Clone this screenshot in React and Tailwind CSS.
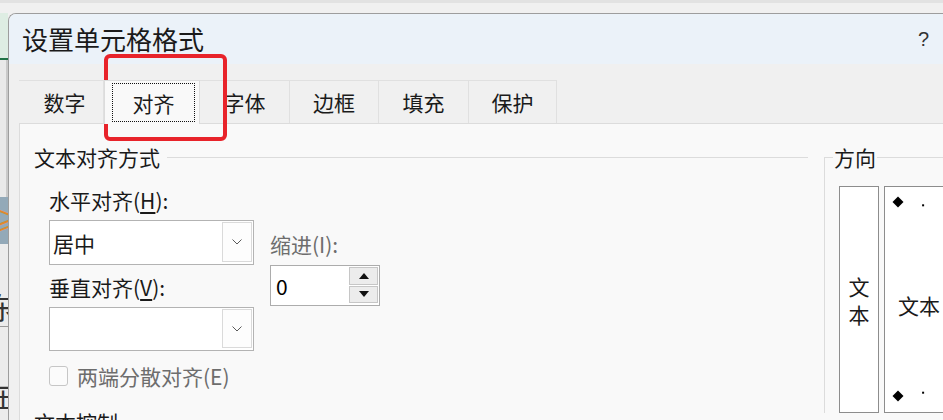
import React from "react";

function Chevron() {
  return (
    <svg width="10" height="6" viewBox="0 0 10 6">
      <polyline points="0.5,0.5 5,5 9.5,0.5" fill="none" stroke="#5a5a5a" strokeWidth="1" />
    </svg>
  );
}

function Select({ value, h }) {
  return (
    <div className={`flex items-stretch border border-[#b3b3b3] bg-white ${h}`}>
      <div className="flex-1 flex items-center pl-[3px] text-[21px] leading-[24px]">{value}</div>
      <div className="w-[30px] mt-px mr-px mb-[2px] border border-[#dadada] bg-[#fdfdfd] flex items-center justify-center">
        <Chevron />
      </div>
    </div>
  );
}

function Tri({ down }) {
  return (
    <svg width="10" height="6" viewBox="0 0 10 6">
      {down ? <polygon points="0,0 10,0 5,6" fill="#111" /> : <polygon points="0,6 10,6 5,0" fill="#111" />}
    </svg>
  );
}

function Dial() {
  const cx = 13, cy = 112, r = 97;
  const items = [];
  for (let a = 90; a >= -90; a -= 15) {
    const rad = (a * Math.PI) / 180;
    const x = cx + r * Math.cos(rad);
    const y = cy - r * Math.sin(rad);
    if (a % 45 === 0) {
      items.push(<polygon key={a} points={`${x},${y - 5.5} ${x + 5.5},${y} ${x},${y + 5.5} ${x - 5.5},${y}`} fill="#000" />);
    } else {
      items.push(<rect key={a} x={x - 1} y={y - 1} width="2" height="2" fill="#000" />);
    }
  }
  return (
    <svg className="absolute left-0 top-0" width="140" height="225" viewBox="0 0 140 225">
      {items}
    </svg>
  );
}

export default function App() {
  const tabs = [
    { t: "数字", w: "w-[85px]", extra: "pl-[7px]" },
    { t: "对齐", w: "w-[96px]", sel: true },
    { t: "字体", w: "w-[90px]" },
    { t: "边框", w: "w-[89px]" },
    { t: "填充", w: "w-[90px]" },
    { t: "保护", w: "w-[88px]" },
  ];
  return (
    <div className="relative w-[943px] h-[420px] overflow-hidden bg-[#f0f0f0] font-['Noto_Sans_CJK_SC','Microsoft_YaHei',sans-serif] text-[#1a1a1a]">
      <div className="h-[13px] bg-[#f0f0f0] border-t-[3px] border-[#e2e2e2]" />
      <div className="flex h-[407px]">
        {/* sheet behind dialog */}
        <div className="w-[8px] shrink-0 flex flex-col overflow-hidden">
          <div className="h-[45px] bg-[#deede3]" />
          <div className="h-[2px] bg-[#217346]" />
          <div className="h-[137px] bg-[#e9e9e9] border-r-2 border-[#c9c9c9]" />
          <div className="h-[47px] bg-[#93a9b8] overflow-hidden whitespace-nowrap text-[#e08a2c] text-[28px] leading-[47px] -indent-[6px]">≥</div>
          <div className="flex-1 bg-[#ececec] overflow-hidden whitespace-nowrap text-[#333] text-[30px] leading-[34px]">
            <div className="h-[45px]" />
            <div className="-ml-[14px]">东</div>
            <div className="h-px bg-[#9a9a9a] mt-[3px]" />
            <div className="h-[50px]" />
            <div className="-ml-[16px]">在</div>
          </div>
        </div>

        {/* dialog */}
        <div className="flex-1 min-w-0 flex flex-col bg-[#f0f0f0] border-l border-t border-[#9d9d9d] rounded-tl-[8px] overflow-hidden">
          <div className="h-[50px] shrink-0 bg-[#ebf2f9] flex items-center justify-between pl-[13px] pr-[14px]">
            <span className="text-[26px] leading-[30px] text-[#1a1a1a]">设置单元格格式</span>
            <span className="text-[20px] leading-[24px] text-[#333] font-['Liberation_Sans',sans-serif]">?</span>
          </div>
          <div className="flex-1 flex flex-col pl-[10px]">
            <div className="h-[59px] shrink-0 flex items-end">
              {tabs.map((tab) =>
                tab.sel ? (
                  <div key={tab.t} className={`${tab.w} h-[44px] -mb-px relative z-10 bg-[#f9f9f9] border-t border-x border-[#dcdcdc] flex`}>
                    <div className="flex-1 ml-[7px] mr-[4px] mt-[2px] mb-[2px] border border-dotted border-[#111] flex items-center justify-center text-[21px] leading-[24px]">
                      {tab.t}
                    </div>
                  </div>
                ) : (
                  <div key={tab.t} className={`${tab.w} ${tab.extra || ""} h-[43px] bg-[#f0f0f0] border-t border-r border-[#e0e0e0] flex items-center justify-center text-[21px] leading-[24px]`}>
                    {tab.t}
                  </div>
                )
              )}
            </div>
            <div className="flex-1 bg-[#f9f9f9] border-t border-l border-[#dcdcdc] flex items-start pt-[21px] pl-[14px] overflow-hidden">
              {/* left column */}
              <div className="w-[774px] shrink-0 flex flex-col">
                <div className="flex items-center h-[24px]">
                  <span className="text-[21px] leading-[24px]">文本对齐方式</span>
                  <div className="flex-1 h-px bg-[#dcdcdc] ml-[7px]" />
                </div>
                <div className="flex mt-[19px] pl-[15px]">
                  <div className="w-[205px] flex flex-col">
                    <div className="h-[24px] text-[21px] leading-[24px]">
                      水平对齐(<span className="underline underline-offset-[3px]">H</span>):
                    </div>
                    <div className="mt-[8px]">
                      <Select value="居中" h="h-[45px]" />
                    </div>
                    <div className="mt-[10px] h-[24px] text-[21px] leading-[24px]">
                      垂直对齐(<span className="underline underline-offset-[3px]">V</span>):
                    </div>
                    <div className="mt-[8px]">
                      <Select value="" h="h-[44px]" />
                    </div>
                    <div className="mt-[15px] h-[20px] flex items-center">
                      <div className="w-[19px] h-[20px] shrink-0 border border-[#c6c6c6] rounded-[3px] bg-[#fbfbfb]" />
                      <span className="ml-[9px] whitespace-nowrap text-[21px] leading-[24px] text-[#6d6d6d]">两端分散对齐(E)</span>
                    </div>
                  </div>
                  <div className="ml-[16px] pt-[44px] flex flex-col">
                    <div className="h-[24px] text-[21px] leading-[24px] text-[#6d6d6d]">缩进(I):</div>
                    <div className="mt-[9px] w-[110px] h-[41px] flex border border-[#acacac] bg-white">
                      <div className="flex-1 flex items-center pl-[5px] text-[21px] leading-[24px] text-black">0</div>
                      <div className="w-[29px] mt-px mr-px mb-[2px] flex flex-col gap-px">
                        <div className="flex-1 border border-[#c6c6c6] bg-[#ececec] flex items-center justify-center">
                          <Tri />
                        </div>
                        <div className="flex-1 border border-[#c6c6c6] bg-[#ececec] flex items-center justify-center">
                          <Tri down />
                        </div>
                      </div>
                    </div>
                  </div>
                </div>
                <div className="mt-[24px] h-[24px] text-[21px] leading-[24px]">文本控制</div>
              </div>

              {/* orientation group */}
              <fieldset className="ml-[16px] w-[300px] shrink-0 border-l border-t border-[#dcdcdc] border-r-0 border-b-0">
                <legend className="ml-[8px] px-px text-[21px] leading-[24px]">方向</legend>
                <div className="flex mt-[17px] ml-[14px]">
                  <div className="w-[40px] h-[227px] border border-[#8d8d8d] bg-white flex flex-col items-center justify-center text-[21px] leading-[28px]">
                    <span>文</span>
                    <span>本</span>
                  </div>
                  <div className="relative ml-[5px] w-[140px] h-[227px] border border-[#8d8d8d] bg-white flex items-center pl-[13px] pt-[11px] text-[21px] leading-[24px]">
                    <Dial />
                    <span className="relative">文本</span>
                  </div>
                </div>
              </fieldset>
            </div>
          </div>
        </div>
      </div>
      {/* highlight annotation */}
      <div className="absolute left-[104px] top-[54px] w-[123px] h-[87px] border-4 border-[#e8232a] rounded-[6px] pointer-events-none" />
    </div>
  );
}
